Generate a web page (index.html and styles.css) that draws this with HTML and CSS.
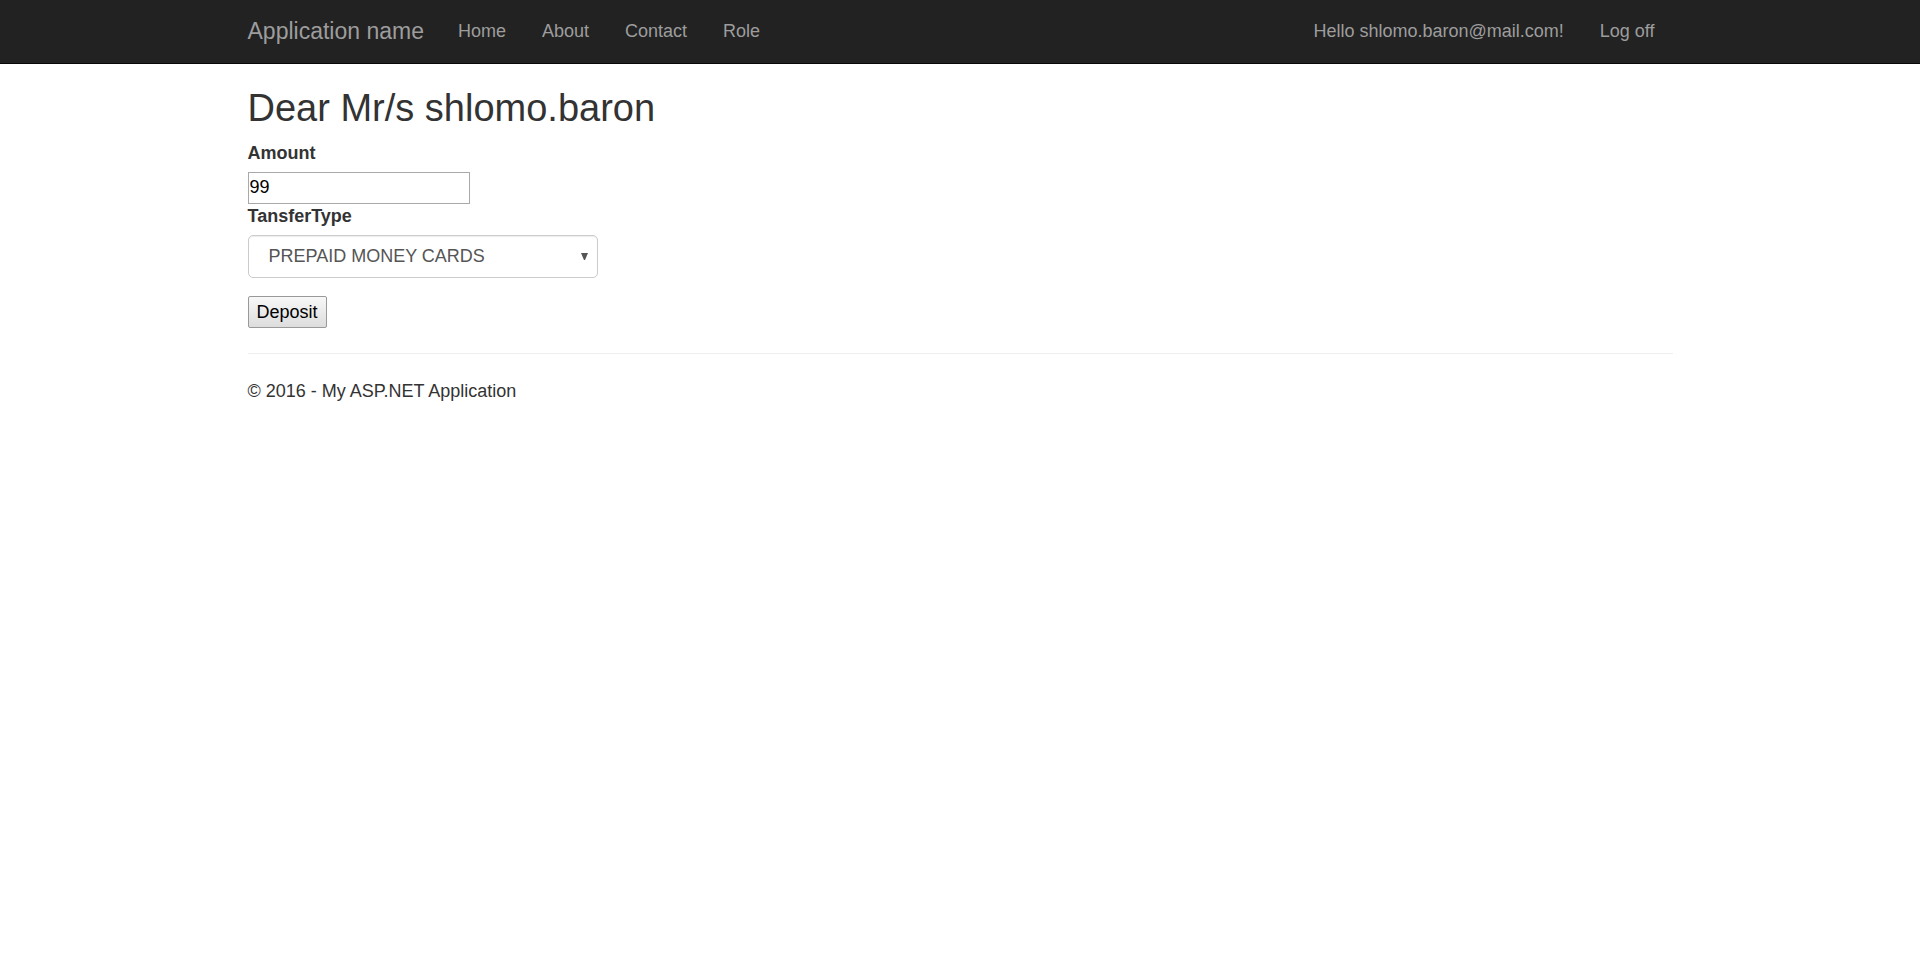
FILE: index.html
```html
<!DOCTYPE html>
<html lang="en">
<head>
<meta charset="utf-8">
<meta name="viewport" content="width=device-width, initial-scale=1">
<title>Deposit - My ASP.NET Application</title>
<link rel="stylesheet" href="styles.css">
</head>
<body>
<header class="navbar">
  <nav class="container navbar-inner">
    <a class="navbar-brand" href="#">Application name</a>
    <ul class="nav">
      <li><a href="#">Home</a></li>
      <li><a href="#">About</a></li>
      <li><a href="#">Contact</a></li>
      <li><a href="#">Role</a></li>
    </ul>
    <ul class="nav nav-right">
      <li><a href="#">Hello shlomo.baron@mail.com!</a></li>
      <li><a href="#">Log off</a></li>
    </ul>
  </nav>
</header>
<main class="container">
  <h2 class="title">Dear Mr/s shlomo.baron</h2>
  <form class="deposit-form">
    <label for="amount">Amount</label>
    <input class="amount" id="amount" name="amount" type="text" value="99">
    <label for="transfer-type">TansferType</label>
    <div class="select-wrap">
      <select class="form-control" id="transfer-type" name="transferType">
        <option>PREPAID MONEY CARDS</option>
      </select>
      <svg class="select-arrow" viewBox="0 0 7 7" aria-hidden="true"><path d="M0 0h7L4 7H3z"/></svg>
    </div>
    <button class="submit" type="submit">Deposit</button>
  </form>
  <hr class="divider">
  <footer>
    <p class="copyright">© 2016 - My ASP.NET Application</p>
  </footer>
</main>
</body>
</html>
```
FILE: styles.css
```css
* {
  box-sizing: border-box;
}

body {
  margin: 0;
  background: #fff;
  color: #333;
  font-family: "Helvetica Neue", "Liberation Sans", Arial, sans-serif;
  font-size: 18px;
  line-height: 25px;
}

.container {
  max-width: 1463px;
  margin: 0 auto;
  padding: 0 19px;
}

.navbar {
  background: #222;
  border-bottom: 1px solid #080808;
}

.navbar-inner {
  display: flex;
  align-items: center;
}

.navbar a {
  display: block;
  padding: 19px 18px;
  color: #9d9d9d;
  text-decoration: none;
}

.navbar a:hover {
  color: #fff;
}

.navbar .navbar-brand {
  padding-right: 16px;
  padding-left: 0;
  font-size: 23px;
}

.nav {
  display: flex;
  margin: 0;
  padding: 0;
  list-style: none;
}

.nav-right {
  margin-left: auto;
}

.title {
  margin: 24px 0 12px;
  font-size: 38px;
  font-weight: 500;
  line-height: 41px;
}

.deposit-form {
  display: flex;
  flex-direction: column;
  align-items: flex-start;
}

.deposit-form label {
  margin-bottom: 6px;
  font-weight: 700;
}

.amount {
  width: 222px;
  height: 32px;
  padding: 1px 1px 3px;
  border: 1px solid #a9a9a9;
  background: #fff;
  color: #000;
  font: inherit;
}

.select-wrap {
  position: relative;
  width: 350px;
  max-width: 100%;
  margin-bottom: 18px;
}

.form-control {
  display: block;
  width: 100%;
  height: 43px;
  padding: 0 32px 0 20px;
  border: 1px solid #ccc;
  border-radius: 5px;
  background: #fff;
  box-shadow: inset 0 1px 1px rgba(0, 0, 0, 0.075);
  color: #555;
  font: inherit;
  appearance: none;
}

.select-arrow {
  position: absolute;
  top: 18px;
  right: 10px;
  width: 7px;
  height: 7px;
  fill: #555;
  pointer-events: none;
}

.submit {
  height: 32px;
  padding: 0 8px;
  border: 1px solid #999;
  border-radius: 2px;
  background: linear-gradient(#f8f8f8, #ddd);
  color: #000;
  font: inherit;
}

.divider {
  margin: 25px 0;
  border: 0;
  border-top: 1px solid #eee;
}

.copyright {
  margin: 0 0 12px;
}
```
